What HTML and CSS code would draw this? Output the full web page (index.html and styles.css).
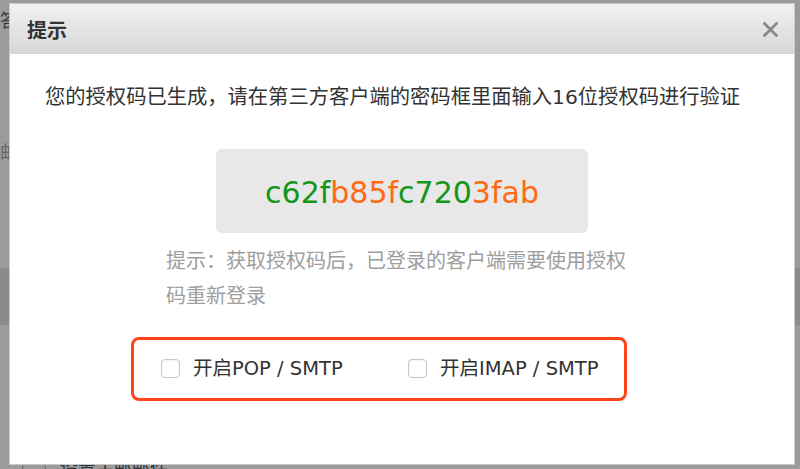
FILE: index.html
```html
<!DOCTYPE html>
<html lang="zh-CN">
<head>
    <meta charset="UTF-8">
    <title>提示</title>
    <link rel="stylesheet" href="styles.css">
</head>
<body>
<div class="page">
    <div class="page-row row-top"><span class="ghost">答</span></div>
    <div class="page-row row-mid"><span class="ghost">邮</span></div>
    <div class="page-band"></div>
    <div class="page-row row-bottom">
        <span class="ghost-circle"></span>
        <span class="ghost-text">设置主邮邮件</span>
    </div>
</div>

<div class="dialog">
    <div class="dialog-head">
        <span class="dialog-title">提示</span>
        <button class="dialog-close" title="关闭">
            <svg width="15" height="15" viewBox="0 0 15 15">
                <path d="M1.5 1.5 L13.5 13.5 M13.5 1.5 L1.5 13.5" stroke="#8a8a8a" stroke-width="2.8" stroke-linecap="square"/>
            </svg>
        </button>
    </div>
    <div class="dialog-body">
        <p class="intro">您的授权码已生成，请在第三方客户端的密码框里面输入16位授权码进行验证</p>
        <div class="code-box">
            <span class="green">c62f</span><span class="orange">b85f</span><span class="green">c720</span><span class="orange">3fab</span>
        </div>
        <p class="hint">提示：获取授权码后，已登录的客户端需要使用授权码重新登录</p>
        <div class="options">
            <label class="option option-first"><input type="checkbox" class="cb"> 开启POP / SMTP</label>
            <label class="option"><input type="checkbox" class="cb"> 开启IMAP / SMTP</label>
        </div>
    </div>
</div>
</body>
</html>
```

FILE: styles.css
```css
body {
  margin: 0;
  padding: 0;
  background-color: #9b9b9b;
  font-family: "DejaVu Sans", "Noto Sans CJK SC", sans-serif;
  color: #333;
  overflow: hidden;
}

/* dimmed page behind the dialog */
.page {
  height: 469px;
  display: flex;
  flex-direction: column;
}

.page-row {
  color: #3a3a3a;
  font-size: 18px;
}

.row-top {
  height: 132px;
  padding-top: 6px;
  box-sizing: border-box;
}

.row-mid {
  height: 136px;
  padding-top: 6px;
  box-sizing: border-box;
  color: #666;
}

.ghost {
  display: inline-block;
}

.page-band {
  height: 57px;
  background-color: #8b8b8b;
}

.row-bottom {
  margin-top: auto;
  height: 12px;
  display: flex;
  align-items: flex-start;
  gap: 14px;
  padding-left: 22px;
  overflow: hidden;
}

.ghost-circle {
  width: 22px;
  height: 22px;
  border: 1px solid #666;
  border-radius: 50%;
  flex: none;
}

.ghost-text {
  margin-top: -3px;
  color: #333;
}

/* dialog */
.dialog {
  position: absolute;
  left: 9px;
  top: 3px;
  width: 784px;
  height: 460px;
  background: #fff;
  border: 1px solid #c9c9c9;
}

.dialog-head {
  height: 50px;
  display: flex;
  align-items: center;
  justify-content: space-between;
  padding: 0 16px 0 17px;
  background: linear-gradient(#f1f1f1, #d7d7d7);
}

.dialog-title {
  font-size: 20px;
  font-weight: bold;
  color: #333;
}

.dialog-close {
  border: none;
  background: none;
  padding: 0;
  width: 15px;
  height: 15px;
  cursor: pointer;
  margin-top: 1px;
}

.dialog-body {
  padding-top: 28px;
}

.intro {
  margin: 0 0 0 35px;
  font-size: 20.3px;
  line-height: 30px;
}

.code-box {
  width: 372px;
  height: 84px;
  margin: 37px auto 0;
  background-color: #e8e8e8;
  border-radius: 6px;
  display: flex;
  align-items: center;
  justify-content: center;
  font-size: 30px;
  padding-top: 2px;
  box-sizing: border-box;
}

.green {
  color: #15951a;
}

.orange {
  color: #ff6a15;
}

.hint {
  width: 472px;
  margin: 11px auto 0;
  font-size: 20px;
  line-height: 35px;
  color: #9e9e9e;
}

.options {
  width: 496px;
  height: 64px;
  margin: 23px 0 0 121px;
  border: 3px solid #ff4419;
  border-radius: 8px;
  box-sizing: border-box;
  display: flex;
  align-items: center;
  padding: 0 0 5px 27px;
}

.option {
  display: flex;
  align-items: center;
  gap: 13px;
  font-size: 19.5px;
  color: #333;
}

.option-first {
  width: 247px;
}

.cb {
  appearance: none;
  -webkit-appearance: none;
  margin: 3px 0 0;
  width: 19px;
  height: 19px;
  border: 1px solid #c6c6c6;
  border-radius: 4px;
  background: #fff;
  box-shadow: inset 0 1px 2px rgba(0, 0, 0, 0.06);
}
```
